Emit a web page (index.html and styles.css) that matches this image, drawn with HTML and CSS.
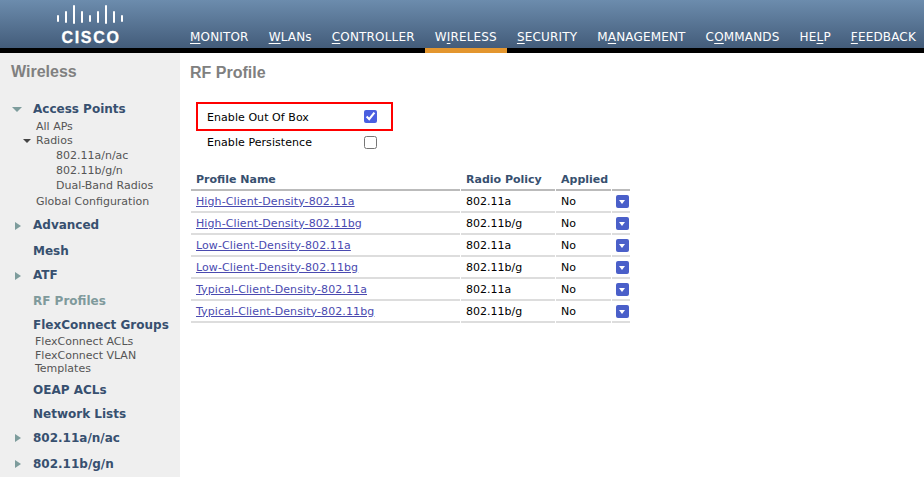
FILE: index.html
```html
<!DOCTYPE html>
<html lang="en">
<head>
    <meta charset="UTF-8">
    <title>RF Profile</title>
    <link rel="stylesheet" href="styles.css">
</head>
<body>
    <div class="header">
        <div class="logo">
            <svg width="70" height="28" viewBox="55 0 70 28">
                <g stroke="#fff" stroke-width="2" stroke-linecap="round">
                    <line x1="58" y1="16" x2="58" y2="21"/>
                    <line x1="66" y1="12" x2="66" y2="22"/>
                    <line x1="74" y1="6" x2="74" y2="23"/>
                    <line x1="82" y1="12" x2="82" y2="22"/>
                    <line x1="90" y1="16" x2="90" y2="21"/>
                    <line x1="98" y1="12" x2="98" y2="22"/>
                    <line x1="106" y1="6" x2="106" y2="23"/>
                    <line x1="114" y1="12" x2="114" y2="22"/>
                    <line x1="122" y1="16" x2="122" y2="21"/>
                </g>
            </svg>
            <span class="logo-text">CISCO</span>
        </div>
        <div class="nav">
            <a class="nav-item"><u>M</u>ONITOR</a>
            <a class="nav-item"><u>W</u>LANs</a>
            <a class="nav-item"><u>C</u>ONTROLLER</a>
            <a class="nav-item active">W<u>I</u>RELESS</a>
            <a class="nav-item"><u>S</u>ECURITY</a>
            <a class="nav-item">M<u>A</u>NAGEMENT</a>
            <a class="nav-item">C<u>O</u>MMANDS</a>
            <a class="nav-item">HE<u>L</u>P</a>
            <a class="nav-item"><u>F</u>EEDBACK</a>
        </div>
    </div>

    <div class="main">
        <div class="sidebar">
            <h2>Wireless</h2>
            <div class="group ap"><span class="arrow down"></span>Access Points</div>
            <div class="sub all-aps">All APs</div>
            <div class="sub"><span class="mini-arrow"></span>Radios</div>
            <div class="sub deep">802.11a/n/ac</div>
            <div class="sub deep">802.11b/g/n</div>
            <div class="sub deep">Dual-Band Radios</div>
            <div class="sub global">Global Configuration</div>
            <div class="group tree"><span class="arrow right"></span>Advanced</div>
            <div class="group"><span class="arrow"></span>Mesh</div>
            <div class="group tree"><span class="arrow right"></span>ATF</div>
            <div class="group current"><span class="arrow"></span>RF Profiles</div>
            <div class="group flex"><span class="arrow"></span>FlexConnect Groups</div>
            <div class="sub tight">FlexConnect ACLs</div>
            <div class="sub tight">FlexConnect VLAN<br>Templates</div>
            <div class="group oeap"><span class="arrow"></span>OEAP ACLs</div>
            <div class="group"><span class="arrow"></span>Network Lists</div>
            <div class="group tree"><span class="arrow right"></span>802.11a/n/ac</div>
            <div class="group tree"><span class="arrow right"></span>802.11b/g/n</div>
        </div>

        <div class="content">
            <h1>RF Profile</h1>
            <div class="option highlighted">
                <label>Enable Out Of Box</label>
                <input type="checkbox" checked>
            </div>
            <div class="option plain">
                <label>Enable Persistence</label>
                <input type="checkbox">
            </div>
            <table class="profiles">
                <thead>
                    <tr><th>Profile Name</th><th>Radio Policy</th><th>Applied</th><th></th></tr>
                </thead>
                <tbody id="rows"></tbody>
            </table>
        </div>
    </div>

    <script>
        const profiles = [
            ['High-Client-Density-802.11a', '802.11a'],
            ['High-Client-Density-802.11bg', '802.11b/g'],
            ['Low-Client-Density-802.11a', '802.11a'],
            ['Low-Client-Density-802.11bg', '802.11b/g'],
            ['Typical-Client-Density-802.11a', '802.11a'],
            ['Typical-Client-Density-802.11bg', '802.11b/g']
        ];

        const rows = document.getElementById('rows');

        profiles.forEach(p => {
            const tr = document.createElement('tr');
            tr.innerHTML = `
                <td><a href="#">${p[0]}</a></td>
                <td>${p[1]}</td>
                <td>No</td>
                <td class="cell-btn"><span class="drop-btn"></span></td>
            `;
            rows.appendChild(tr);
        });
    </script>
</body>
</html>
```

FILE: styles.css
```css
* {
    margin: 0;
    padding: 0;
    box-sizing: border-box;
}

html, body {
    height: 100%;
    overflow: hidden;
}

body {
    font-family: 'DejaVu Sans', sans-serif;
    font-size: 11px;
    color: #000;
    background: #fff;
}

.header {
    display: flex;
    height: 53px;
    background: linear-gradient(#6c8cad, #435c7a) no-repeat;
    background-size: 100% 48px;
    background-color: #000;
}

.logo {
    width: 180px;
    flex: none;
    display: flex;
    flex-direction: column;
    align-items: center;
}

.logo svg {
    display: block;
}

.logo-text {
    color: #fff;
    font-family: 'Liberation Sans', sans-serif;
    font-weight: 700;
    font-size: 16px;
    line-height: 15px;
    letter-spacing: 1.7px;
    padding-left: 2px;
    margin-top: 2px;
    -webkit-text-stroke: 0.3px #fff;
}

.nav {
    display: flex;
    align-items: flex-end;
}

.nav-item {
    color: #fff;
    font-size: 12px;
    line-height: 14px;
    letter-spacing: 0.17px;
    padding: 0 10px 9px 10px;
    height: 53px;
    display: flex;
    align-items: flex-end;
    white-space: pre;
}

.nav-item u {
    text-underline-offset: 2px;
}

.nav-item.active {
    border-bottom: 5px solid #e3962f;
    padding-bottom: 4px;
}

.main {
    display: flex;
    height: calc(100% - 53px);
}

.sidebar {
    width: 180px;
    flex: none;
    background: #efefef;
    padding: 10px 0 0 11px;
    overflow: hidden;
}

.sidebar h2 {
    font-family: 'Liberation Sans', sans-serif;
    font-size: 16px;
    line-height: 18px;
    color: #808080;
}

.group {
    font-weight: 700;
    font-size: 12px;
    line-height: 15px;
    color: #37506f;
    padding-top: 9px;
    display: flex;
    align-items: center;
}

.group.ap {
    padding-top: 21px;
    padding-bottom: 3px;
}

.group.tree {
    padding-bottom: 2px;
}

.group.flex {
    padding-bottom: 2px;
}

.group.oeap {
    padding-top: 7px;
}

.group.current {
    color: #7f9a9c;
}

.arrow {
    width: 22px;
    flex: none;
    display: block;
}

.arrow.down::before {
    content: "";
    display: block;
    width: 0;
    border-left: 5px solid transparent;
    border-right: 5px solid transparent;
    border-top: 5px solid #7d9c9c;
    margin-left: 1px;
}

.arrow.right::before {
    content: "";
    display: block;
    width: 0;
    border-top: 4.5px solid transparent;
    border-bottom: 4.5px solid transparent;
    border-left: 6px solid #7d9c9c;
    margin-left: 4px;
}

.sub {
    font-size: 11px;
    line-height: 15px;
    color: #555;
    padding-left: 25px;
}

.all-aps {
    line-height: 14px;
    margin-bottom: -1px;
}

.sub.deep {
    padding-left: 45px;
}

.sub.global {
    padding-top: 1px;
}

.sub.tight {
    line-height: 13.5px;
    padding-left: 24px;
}

.mini-arrow {
    display: inline-block;
    width: 0;
    border-left: 4px solid transparent;
    border-right: 4px solid transparent;
    border-top: 4px solid #444;
    margin-left: -13px;
    margin-right: 5px;
    vertical-align: 1px;
}

.content {
    flex: 1;
    padding: 11px 0 0 10px;
}

.content h1 {
    font-family: 'Liberation Sans', sans-serif;
    font-size: 16px;
    line-height: 18px;
    color: #808080;
    margin-bottom: 20px;
}

.option {
    display: flex;
    align-items: center;
    width: 197px;
    height: 29px;
    margin-left: 6px;
    padding-left: 9px;
    border: 2px solid transparent;
}

.option.plain {
    height: 22px;
}

.option label {
    width: 157px;
    letter-spacing: 0.06px;
}

.highlighted label {
    padding-top: 2px;
}

.option input {
    width: 13px;
    height: 13px;
    margin: 0;
    accent-color: #4a5fe0;
}

.highlighted {
    border-color: #f00;
}

.profiles {
    border-collapse: separate;
    border-spacing: 1px 0;
    margin: 16px 0 0 0;
    width: 441px;
}

.profiles th {
    text-align: left;
    color: #37506f;
    font-size: 11px;
    height: 22px;
    padding-left: 5px;
    border-bottom: 2px solid #bbb;
}

.profiles td {
    height: 22px;
    padding-left: 5px;
    border-bottom: 2px solid #ddd;
}

.profiles th:nth-child(1) { width: 269px; }
.profiles th:nth-child(2) { width: 94px; }
.profiles th:nth-child(3) { width: 55px; }

.profiles a {
    color: #4a4ab0;
    letter-spacing: 0.1px;
}

.profiles td.cell-btn {
    padding: 0 1px 0 0;
    text-align: right;
}

.drop-btn {
    display: inline-block;
    width: 13px;
    height: 13px;
    background: #4a5fc9;
    border-radius: 2px;
    position: relative;
    vertical-align: middle;
}

.drop-btn::after {
    content: "";
    position: absolute;
    left: 3px;
    top: 5px;
    border-left: 3.5px solid transparent;
    border-right: 3.5px solid transparent;
    border-top: 4px solid #fff;
}
```
